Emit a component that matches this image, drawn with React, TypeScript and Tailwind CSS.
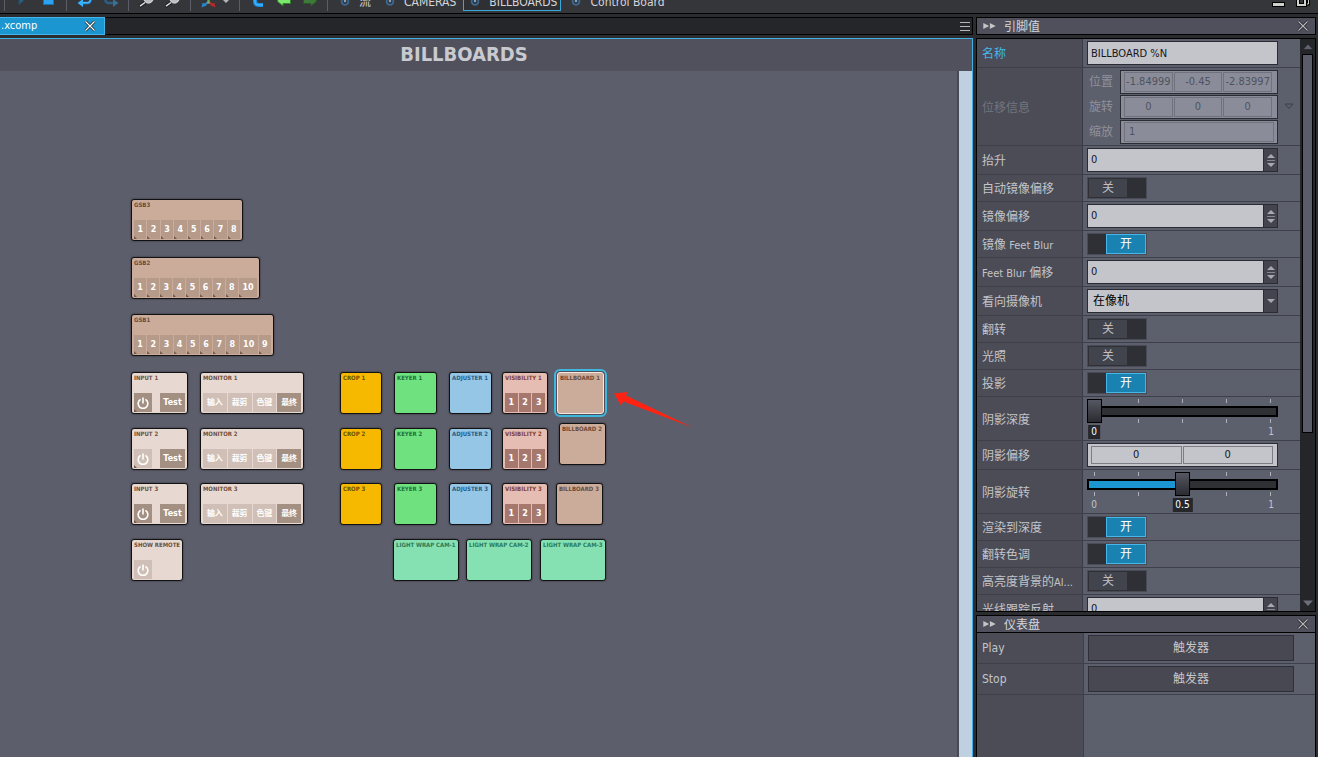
import { useState } from "react";
import type { CSSProperties, ReactNode } from "react";
import clsx from "clsx";

/* ---------- shared bits ---------- */

function CloseIcon({ className }: { className?: string }) {
  return (
    <svg viewBox="0 0 12 12" className={clsx("h-3 w-3", className)} fill="none">
      <path d="M1.5 1.5l9 9M10.5 1.5l-9 9" stroke="#1d1e22" strokeWidth="2.6" />
      <path d="M1.5 1.5l9 9M10.5 1.5l-9 9" stroke="currentColor" strokeWidth="1.2" />
    </svg>
  );
}

// latin runs sit one pixel smaller than the chinese glyphs
function MixedText({ text }: { text: string }) {
  return (
    <>
      {text.split(/([\x20-\x7e]+)/).map((part, i) =>
        /^[\x20-\x7e]+$/.test(part) ? (
          <span key={i} className="text-[11px]">
            {part}
          </span>
        ) : (
          part
        )
      )}
    </>
  );
}

/* ---------- toolbar ---------- */

function Separator() {
  return <span className="mx-1 h-[22px] w-0.5 shrink-0 border-l border-[#5c5d68]" />;
}

function ToolButton({ label, children }: { label: string; children: ReactNode }) {
  return (
    <button type="button" aria-label={label} className="flex h-[22px] w-[26px] shrink-0 items-center justify-center">
      <svg viewBox="0 0 16 16" className="h-4 w-4" fill="none">
        {children}
      </svg>
    </button>
  );
}

const views = [
  { name: "流", active: false },
  { name: "CAMERAS", active: false },
  { name: "BILLBOARDS", active: true },
  { name: "Control Board", active: false },
];

function Magnifier() {
  return (
    <>
      <path d="M6 10.500L0.500 14.500" stroke="#1d1e22" strokeWidth="3.500" />
      <circle cx="9.500" cy="6.500" r="4.600" fill="#b9bec6" stroke="#e6e6e6" />
      <path d="M6 10.500L1 14.200" stroke="#e0e0e0" strokeWidth="1.500" />
    </>
  );
}

function Toolbar() {
  return (
    <header className="flex h-[14px] shrink-0 items-end overflow-hidden border-b border-black bg-[#35363a]">
      <div className="flex h-[26px] w-full items-center">
        <Separator />
        <ToolButton label="Play">
          <path d="M4 1v12l7-7z" fill="#2b5f80" stroke="#224c66" />
        </ToolButton>
        <ToolButton label="Stop">
          <rect x="2.500" y="2" width="10" height="10.500" fill="#2ba3f0" stroke="#1573b8" />
        </ToolButton>
        <Separator />
        <ToolButton label="Undo">
          <path d="M4 11h6.500a3 3 0 0 0 3-3V6" stroke="#1e8fe0" strokeWidth="2.600" />
          <path d="M4 10.700h6.500a2.700 2.700 0 0 0 2.700-2.700V6" stroke="#5cc4ff" strokeWidth="1" />
          <path d="M0.500 11l5.500-4v8z" fill="#35b2ff" />
        </ToolButton>
        <ToolButton label="Redo">
          <path d="M12 11H5.500a3 3 0 0 1-3-3V6" stroke="#2f5f80" strokeWidth="2.600" />
          <path d="M15.500 11L10 7v8z" fill="#3a6f92" />
        </ToolButton>
        <Separator />
        <ToolButton label="Zoom in">
          <Magnifier />
        </ToolButton>
        <ToolButton label="Zoom out">
          <Magnifier />
        </ToolButton>
        <Separator />
        <ToolButton label="Axes">
          <path d="M7.500 10L4 12.500" stroke="#2f8fd0" strokeWidth="1.800" />
          <path d="M0.500 15.500l1-4.500 3.500.500.500 2z" fill="#2787c4" />
          <path d="M7.500 10l4 2.500" stroke="#b83232" strokeWidth="1.800" />
          <path d="M14.500 15.500l-1-4.500-3.500.500-.500 2z" fill="#b82828" />
          <path d="M7.500 10.500V0" stroke="#4dbb4a" strokeWidth="2.200" />
          <circle cx="7.500" cy="10.500" r="1.300" fill="#9a9a70" />
        </ToolButton>
        <button type="button" aria-label="Axis options" className="flex h-[22px] w-[13px] shrink-0 items-center">
          <svg viewBox="0 0 8 6" className="h-1.5 w-2" fill="#b4b5bc">
            <path d="M0 2h8L4 6z" />
          </svg>
        </button>
        <Separator />
        <ToolButton label="Link">
          <path d="M5 0v9c0 3 2 4 4 4h4" stroke="#1e8fe0" strokeWidth="4" />
          <path d="M5 0v9c0 3 2 4 4 4h4" stroke="#3bb5ff" strokeWidth="1.500" />
        </ToolButton>
        <ToolButton label="Back">
          <path d="M1 9l6-5.500V7h7.500v4.500H7V14z" fill="#7ae86a" stroke="#35812d" />
        </ToolButton>
        <ToolButton label="Forward">
          <path d="M15 9L9 3.500V7H1.500v4.500H9V14z" fill="#3d7a3a" stroke="#2c552b" />
        </ToolButton>
        <Separator />
        <nav className="flex items-center gap-[3px]">
          {views.map((view) => (
            <a
              key={view.name}
              href="#"
              className={clsx(
                "flex h-[22px] items-center gap-2 border pt-1 pr-[3px] pl-[5px] text-xs leading-none text-[#d4d5d9]",
                view.active ? "border-[#36a9e0] bg-[#2f3034]" : "border-transparent"
              )}
            >
              <svg viewBox="0 0 12 12" className="h-3 w-3" fill="none">
                <circle cx="6" cy="5.5" r="3.4" stroke="#3c678f" strokeWidth="1.8" />
                <circle cx="6" cy="5" r="1.2" fill="#86a8c8" />
              </svg>
              <span>{view.name}</span>
            </a>
          ))}
        </nav>
        <div className="ml-auto flex items-center gap-2.5 pr-2 text-[#d0d0cc]">
          <button type="button" aria-label="Minimize">
            <svg viewBox="0 0 14 14" className="h-3.5 w-3.5">
              <rect x="0.500" y="9.500" width="12" height="4" fill="currentColor" stroke="#000" />
            </svg>
          </button>
          <button type="button" aria-label="Restore">
            <svg viewBox="0 0 14 14" className="h-3.5 w-3.5" fill="none">
              <path d="M3 0h9.500v11H3z" stroke="#000" strokeWidth="3" />
              <path d="M3 0h9.500v11H3z" stroke="currentColor" />
              <path d="M2 3h7v9H2z" fill="#35363a" stroke="#000" strokeWidth="4" />
              <path d="M2 3h7v9H2z" stroke="currentColor" strokeWidth="2" />
            </svg>
          </button>
        </div>
      </div>
    </header>
  );
}

/* ---------- node canvas ---------- */

type Tone = "sand" | "cream" | "orange" | "green" | "blue" | "rose" | "mint";

const tones: Record<Tone, string> = {
  sand: "bg-[#cbac9a] text-[#6b4a38]",
  cream: "bg-[#e7d9d1] text-[#6b5040]",
  orange: "bg-[#f7b900] text-[#6a5000]",
  green: "bg-[#6fe27f] text-[#1f7038]",
  blue: "bg-[#96c6e6] text-[#275f86]",
  rose: "bg-[#e6bdb3] text-[#843f30]",
  mint: "bg-[#85e0b2] text-[#2c7a58]",
};

interface Cell {
  text: string;
  kind: "preset" | "on" | "off" | "channel";
}

interface CanvasNode {
  title: string;
  tone: Tone;
  x: number;
  y: number;
  w: number;
  cells?: Cell[];
  power?: "on" | "off";
  selected?: boolean;
}

const presets = (...names: string[]): Cell[] => names.map((text) => ({ text, kind: "preset" }));

const channels: Cell[] = ["1", "2", "3"].map((text) => ({ text, kind: "channel" }));

const monitorCells: Cell[] = [
  { text: "输入", kind: "off" },
  { text: "裁剪", kind: "off" },
  { text: "色键", kind: "off" },
  { text: "最终", kind: "on" },
];

const rowTops = [301, 357, 412];

const nodes: CanvasNode[] = [
  { title: "GSB3", tone: "sand", x: 131, y: 128, w: 112, cells: presets("1", "2", "3", "4", "5", "6", "7", "8") },
  { title: "GSB2", tone: "sand", x: 131, y: 186, w: 129, cells: presets("1", "2", "3", "4", "5", "6", "7", "8", "10") },
  { title: "GSB1", tone: "sand", x: 131, y: 243, w: 143, cells: presets("1", "2", "3", "4", "5", "6", "7", "8", "10", "9") },
  ...rowTops.flatMap((y, i): CanvasNode[] => [
    { title: `INPUT ${i + 1}`, tone: "cream", x: 131, y, w: 57, power: i === 1 ? "off" : "on", cells: [{ text: "Test", kind: "on" }] },
    { title: `MONITOR ${i + 1}`, tone: "cream", x: 200, y, w: 104, cells: monitorCells },
    { title: `CROP ${i + 1}`, tone: "orange", x: 340, y, w: 42 },
    { title: `KEYER ${i + 1}`, tone: "green", x: 394, y, w: 43 },
    { title: `ADJUSTER ${i + 1}`, tone: "blue", x: 449, y, w: 43 },
    { title: `VISIBILITY ${i + 1}`, tone: "rose", x: 502, y, w: 46, cells: channels },
  ]),
  { title: "BILLBOARD 1", tone: "sand", x: 557, y: 301, w: 47, selected: true },
  { title: "BILLBOARD 2", tone: "sand", x: 559, y: 352, w: 47 },
  { title: "BILLBOARD 3", tone: "sand", x: 556, y: 412, w: 47 },
  { title: "SHOW REMOTE", tone: "cream", x: 131, y: 468, w: 52, power: "off" },
  { title: "LIGHT WRAP CAM-1", tone: "mint", x: 393, y: 468, w: 66 },
  { title: "LIGHT WRAP CAM-2", tone: "mint", x: 466, y: 468, w: 66 },
  { title: "LIGHT WRAP CAM-3", tone: "mint", x: 540, y: 468, w: 66 },
];

const cellTones: Record<Cell["kind"], string> = {
  preset: "bg-[#b69a8a]",
  on: "bg-[#a48f83]",
  off: "bg-[#d0bfb6]",
  channel: "bg-[#a6786d]",
};

function CornerMark() {
  return (
    <svg viewBox="0 0 3 3" className="absolute bottom-0 left-0 h-[3px] w-[3px]" fill="#735a4c">
      <path d="M0 0l3 3H0z" />
    </svg>
  );
}

function NodeCell({ cell, className }: { cell: Cell; className?: string }) {
  return (
    <button
      type="button"
      className={clsx(
        "relative flex h-[19px] items-center justify-center font-['DejaVu_Sans','Noto_Sans_CJK_SC',sans-serif] text-[8px] leading-none font-bold text-white",
        cellTones[cell.kind],
        className
      )}
    >
      {cell.text}
      {cell.kind === "preset" && <CornerMark />}
    </button>
  );
}

function NodeBox({ node }: { node: CanvasNode }) {
  return (
    <div
      className={clsx(
        "absolute flex h-[42px] flex-col justify-between rounded-[3px] border px-0.5 pb-px shadow-[0_0_2px_rgba(0,0,0,0.6)]",
        tones[node.tone],
        node.selected ? "border-[#f3e9e2] outline-2 outline-offset-1 outline-[#3fb6dc]" : "border-[#111214]"
      )}
      style={{ left: node.x, top: node.y, width: node.w }}
    >
      <div className="text-[6px] leading-[9px] font-bold whitespace-nowrap">{node.title}</div>
      {(node.cells || node.power) && (
        <div className={clsx("flex", node.power ? "justify-between" : "gap-px")}>
          {node.power && (
            <button
              type="button"
              aria-label={`${node.title} power`}
              className={clsx(
                "relative flex h-[19px] w-[18px] items-center justify-center",
                node.power === "on" ? "bg-[#a48f83]" : "bg-[#d0bfb6]"
              )}
            >
              <svg viewBox="0 0 12 12" className="h-3 w-3" fill="none" stroke="#fff" strokeWidth="1.6">
                <path d="M3.600 2.400a4.800 4.800 0 1 0 4.800 0M6 0.500v6" />
              </svg>
              {node.cells && <CornerMark />}
            </button>
          )}
          {node.cells?.map((cell) => (
            <NodeCell
              key={cell.text}
              cell={cell}
              className={clsx(node.power ? "w-[25px]" : cell.text === "10" ? "flex-[3]" : "flex-[2]")}
            />
          ))}
        </div>
      )}
    </div>
  );
}

function Canvas() {
  return (
    <section className="flex min-h-0 flex-1 flex-col border-t border-r border-[#3fb0e4] bg-[#5d5e6b]">
      <h1 className="h-8 shrink-0 bg-[#50515d] pr-11 text-center text-[20px] leading-[30px] font-bold text-[#c9cacf]">
        BILLBOARDS
      </h1>
      <div className="flex min-h-0 flex-1">
        <div className="relative flex-1 overflow-hidden">
          {nodes.map((node) => (
            <NodeBox key={node.title} node={node} />
          ))}
          <svg viewBox="0 0 80 38" className="absolute top-[320px] left-[613px] h-[38px] w-20" fill="#ff2314">
            <path d="M1 2.500L14.500 1l-1.500 3.500L79.500 36.500 13 11.500l-2.500-1.200L8 14.500z" />
          </svg>
        </div>
        <div className="w-[15px] border-l-2 border-[#484955] bg-[#bfd1e0]" />
      </div>
    </section>
  );
}

/* ---------- property panel ---------- */

interface RowProps {
  id: string;
  label: string;
  size: "toggle" | "field" | "slider" | "group";
  tone?: "normal" | "accent" | "disabled";
  children: ReactNode;
}

const rowSizes = {
  toggle: "h-[27px]",
  field: "h-[29px]",
  slider: "h-11",
  group: "h-[78px]",
};

function Row({ id, label, size, tone = "normal", children }: RowProps) {
  return (
    <div className={clsx("flex shrink-0 border-b border-[#3e3f4a]", rowSizes[size])}>
      <label
        htmlFor={id}
        className={clsx(
          "flex w-[106px] shrink-0 items-center border-r border-[#3a3b44] bg-[#4b4c56] pt-0.5 pl-[5px] whitespace-pre",
          tone === "accent" && "text-[#45b8ea]",
          tone === "disabled" && "text-[#73757f]"
        )}
      >
        <span>
          <MixedText text={label} />
        </span>
      </label>
      <div className="min-w-0 flex-1 bg-[#5c5f6c] pt-0.5 pr-[22px] pl-1">{children}</div>
    </div>
  );
}

function Stepper() {
  return (
    <div className="flex w-[14px] shrink-0 flex-col items-center justify-center gap-px border-l border-[#2b2c33] bg-[#43444d]">
      <button type="button" aria-label="Increase" className="flex">
        <svg viewBox="0 0 8 6" className="h-1.5 w-2" fill="#a7a8b0">
          <path d="M0 5l4-4 4 4z" />
        </svg>
      </button>
      <span className="h-px w-2 bg-[#85868f]" />
      <button type="button" aria-label="Decrease" className="flex">
        <svg viewBox="0 0 8 6" className="h-1.5 w-2" fill="#a7a8b0">
          <path d="M0 1l4 4 4-4z" />
        </svg>
      </button>
    </div>
  );
}

function NumberField({ id }: { id: string }) {
  return (
    <div className="flex h-6 border border-[#2b2c33]">
      <input
        id={id}
        type="text"
        defaultValue="0"
        className="min-w-0 flex-1 bg-[#c4c5cb] px-[3px] text-[11px] text-[#15161a] outline-none"
      />
      <Stepper />
    </div>
  );
}

function Toggle({ id, initial }: { id: string; initial: boolean }) {
  const [on, setOn] = useState(initial);
  return (
    <button
      id={id}
      type="button"
      role="switch"
      aria-checked={on}
      onClick={() => setOn(!on)}
      className={clsx("flex h-[22px] w-[60px] border border-[#494b56] bg-[#2f3035]", on && "justify-end")}
    >
      <span
        className={clsx(
          "flex h-5 w-10 items-center justify-center border text-xs",
          on ? "border-[#47b6e8] bg-[#1a82b1] text-white" : "border-[#2f3035] bg-[#41434d] text-[#bfc0c6]"
        )}
      >
        {on ? "开" : "关"}
      </span>
    </button>
  );
}

function Slider({ id, initial }: { id: string; initial: number }) {
  const [value, setValue] = useState(initial);
  const ticks = (
    <div className="flex justify-between px-[7px]">
      {[0, 1, 2, 3, 4].map((tick) => (
        <span key={tick} className="h-1 w-px bg-[#b0b1b8]" />
      ))}
    </div>
  );
  return (
    <div>
      <div className="relative flex h-6 flex-col justify-between">
        {ticks}
        {ticks}
        <input
          id={id}
          type="range"
          min={0}
          max={1}
          step={0.01}
          value={value}
          onChange={(e) => setValue(Number(e.target.value))}
          className="absolute inset-0 h-6 w-full appearance-none bg-transparent outline-none [&::-webkit-slider-runnable-track]:h-[11px] [&::-webkit-slider-runnable-track]:bg-(image:--fill) [&::-webkit-slider-runnable-track]:shadow-[inset_0_0_0_2px_#000] [&::-webkit-slider-thumb]:-mt-[7px] [&::-webkit-slider-thumb]:h-6 [&::-webkit-slider-thumb]:w-[15px] [&::-webkit-slider-thumb]:appearance-none [&::-webkit-slider-thumb]:border [&::-webkit-slider-thumb]:border-black [&::-webkit-slider-thumb]:bg-linear-to-b [&::-webkit-slider-thumb]:from-[#555762] [&::-webkit-slider-thumb]:to-[#2b2c32]"
          style={
            {
              "--fill": `linear-gradient(to right, #1b96d0 ${value * 100}%, #2f3034 ${value * 100}%)`,
            } as CSSProperties
          }
        />
      </div>
      <div className="relative mt-0.5 flex justify-between px-[3px] text-[10px] leading-[14px]">
        <span className="w-2 text-center">0</span>
        <span className="w-2 text-center">1</span>
        <div className="absolute inset-x-[7px] inset-y-0">
          <output
            htmlFor={id}
            className="absolute -translate-x-1/2 bg-[#26272b] px-[3px] text-white"
            style={{ left: `${value * 100}%` }}
          >
            {value}
          </output>
        </div>
      </div>
    </div>
  );
}

const transformRows = [
  { name: "位置", values: ["-1.84999", "-0.45", "-2.83997"] },
  { name: "旋转", values: ["0", "0", "0"] },
  { name: "缩放", values: ["1"] },
];

function TransformFields({ id }: { id: string }) {
  return (
    <div className="relative flex flex-col gap-px text-[#8f919d]">
      {transformRows.map((row, r) => (
        <div key={row.name} className="flex h-6 items-center">
          <span className="w-[33px] pl-0.5">{row.name}</span>
          <div
            className={clsx(
              "flex h-6 min-w-0 flex-1 gap-px border border-[#2b2c33] bg-[#8a8d99] py-px pl-[3px]",
              row.values.length > 1 ? "pr-[5px]" : "pr-[3px]"
            )}
          >
            {row.values.map((value, i) => (
              <input
                key={i}
                id={r === 0 && i === 0 ? id : undefined}
                aria-label={`${row.name} ${i + 1}`}
                type="text"
                disabled
                defaultValue={value}
                className={clsx(
                  "w-0 min-w-0 flex-1 border border-[#70727d] bg-transparent text-[11px] text-[#50525e]",
                  row.values.length > 1 ? "px-px text-center" : "px-1"
                )}
              />
            ))}
          </div>
        </div>
      ))}
      <svg viewBox="0 0 10 7" className="absolute top-[33px] -right-4 h-[7px] w-2.5" fill="none" stroke="#3d3e48">
        <path d="M1 1h8L5 5.500z" />
      </svg>
    </div>
  );
}

function PanelHeader({ title }: { title: string }) {
  return (
    <div className="flex h-[18px] shrink-0 items-center border border-black bg-[#4f505b] px-1.5">
      <svg viewBox="0 0 14 8" className="h-2 w-3.5" fill="#c3c4c8" stroke="#33343a" strokeWidth="0.500">
        <path d="M0 0.500v7L7 4zM6.500 0.500v7L13.500 4z" />
      </svg>
      <h2 className="ml-[7px] pt-px text-xs leading-4 text-[#d5d6da]">{title}</h2>
      <button type="button" aria-label={`关闭${title}`} className="ml-auto text-[#b5b6bc]">
        <CloseIcon className="h-2.5 w-2.5" />
      </button>
    </div>
  );
}

function ScrollBar() {
  return (
    <div className="flex w-[15px] shrink-0 flex-col items-center gap-[3px] bg-[#25262a] pt-1 pb-1">
      <svg viewBox="0 0 10 8" className="h-2 w-2.5 shrink-0" fill="#5f616e" stroke="#17181b" strokeWidth="0.500">
        <path d="M0 6.500L5 1l5 5.500z" />
      </svg>
      <div className="min-h-0 flex-1">
        <div className="h-[70%] w-[11px] border border-black bg-[#5a5c69]" />
      </div>
      <svg viewBox="0 0 10 8" className="h-2 w-2.5 shrink-0" fill="#6c6e7b">
        <path d="M0 1.500L5 7l5-5.500z" />
      </svg>
    </div>
  );
}

function PropertyPanel() {
  return (
    <div className="flex min-h-0 flex-1 flex-col gap-[3px]">
      <PanelHeader title="引脚值" />
      <div className="flex min-h-0 flex-1 border border-black">
        <form className="flex min-w-0 flex-1 flex-col overflow-hidden" onSubmit={(e) => e.preventDefault()}>
          <Row id="name" label="名称" size="field" tone="accent">
            <input
              id="name"
              type="text"
              defaultValue="BILLBOARD %N"
              className="h-6 w-full border border-[#2b2c33] bg-[#c4c5cb] px-[3px] text-[11px] text-[#15161a] outline-none"
            />
          </Row>
          <Row id="transform" label="位移信息" size="group" tone="disabled">
            <TransformFields id="transform" />
          </Row>
          <Row id="lift" label="抬升" size="field">
            <NumberField id="lift" />
          </Row>
          <Row id="auto-mirror" label="自动镜像偏移" size="toggle">
            <Toggle id="auto-mirror" initial={false} />
          </Row>
          <Row id="mirror-offset" label="镜像偏移" size="field">
            <NumberField id="mirror-offset" />
          </Row>
          <Row id="mirror-blur" label="镜像 Feet Blur" size="toggle">
            <Toggle id="mirror-blur" initial />
          </Row>
          <Row id="blur-offset" label="Feet Blur 偏移" size="field">
            <NumberField id="blur-offset" />
          </Row>
          <Row id="look-at" label="看向摄像机" size="field">
            <div className="relative flex h-6 border border-[#2b2c33]">
              <select
                id="look-at"
                className="min-w-0 flex-1 appearance-none bg-[#c4c5cb] pl-[5px] text-xs text-black outline-none"
              >
                <option>在像机</option>
              </select>
              <span className="flex w-[14px] items-center justify-center border-l border-[#2b2c33] bg-[#43444d]">
                <svg viewBox="0 0 8 6" className="h-1.5 w-2" fill="#a7a8b0">
                  <path d="M0 1l4 4 4-4z" />
                </svg>
              </span>
            </div>
          </Row>
          <Row id="flip" label="翻转" size="toggle">
            <Toggle id="flip" initial={false} />
          </Row>
          <Row id="lighting" label="光照" size="toggle">
            <Toggle id="lighting" initial={false} />
          </Row>
          <Row id="shadow" label="投影" size="toggle">
            <Toggle id="shadow" initial />
          </Row>
          <Row id="shadow-depth" label="阴影深度" size="slider">
            <Slider id="shadow-depth" initial={0} />
          </Row>
          <Row id="shadow-offset" label="阴影偏移" size="field">
            <div className="flex h-6 gap-px border border-[#2b2c33] bg-[#c4c5cb] py-0.5 pr-1 pl-[3px]">
              <input
                id="shadow-offset"
                type="text"
                defaultValue="0"
                className="w-0 flex-1 border border-[#7c7d86] text-center text-[11px] text-[#15161a]"
              />
              <input
                aria-label="阴影偏移 Y"
                type="text"
                defaultValue="0"
                className="w-0 flex-1 border border-[#7c7d86] text-center text-[11px] text-[#15161a]"
              />
            </div>
          </Row>
          <Row id="shadow-rotation" label="阴影旋转" size="slider">
            <Slider id="shadow-rotation" initial={0.5} />
          </Row>
          <Row id="render-depth" label="渲染到深度" size="toggle">
            <Toggle id="render-depth" initial />
          </Row>
          <Row id="flip-tone" label="翻转色调" size="toggle">
            <Toggle id="flip-tone" initial />
          </Row>
          <Row id="highlight-alpha" label="高亮度背景的Al..." size="toggle">
            <Toggle id="highlight-alpha" initial={false} />
          </Row>
          <Row id="ray-reflection" label="光线跟踪反射" size="field">
            <NumberField id="ray-reflection" />
          </Row>
        </form>
        <ScrollBar />
      </div>
    </div>
  );
}

function Dashboard() {
  return (
    <div className="flex h-[142px] shrink-0 flex-col">
      <PanelHeader title="仪表盘" />
      <div className="flex flex-1 flex-col border-x border-black">
        {["Play", "Stop"].map((name) => (
          <div key={name} className="flex h-[31px] border-b border-[#3e3f4a]">
            <label
              htmlFor={`trigger-${name}`}
              className="flex w-[107px] items-center border-r border-[#3e3f4a] bg-[#4b4c56] pl-[5px] text-xs"
            >
              {name}
            </label>
            <div className="flex-1 bg-[#5c5f6c] pt-0.5 pr-[21px] pl-1">
              <button
                id={`trigger-${name}`}
                type="button"
                className="h-[26px] w-full border border-[#2f3037] bg-[#474852] text-xs text-[#c6c7cc]"
              >
                触发器
              </button>
            </div>
          </div>
        ))}
        <div className="flex flex-1">
          <div className="w-[107px] border-r border-[#3e3f4a] bg-[#4b4c56]" />
          <div className="flex-1 bg-[#5c5f6c]" />
        </div>
      </div>
    </div>
  );
}

export default function App() {
  return (
    <div className="flex h-screen flex-col overflow-hidden bg-[#2b2c30] font-['DejaVu_Sans_Condensed','DejaVu_Sans','Noto_Sans_CJK_SC',sans-serif] text-xs text-[#c3c4c9]">
      <Toolbar />
      <div className="flex min-h-0 flex-1 gap-[3px] pt-[3px] pr-[2px]">
        <main className="flex min-w-0 flex-1 flex-col gap-[3px]">
          <div className="flex h-[18px] shrink-0 items-center justify-between border-y border-r border-black bg-[#25262a]">
            <div className="-my-px flex h-[18px] w-[105px] items-center justify-between border border-l-0 border-[#45b4e8] bg-[#1b96d0] pr-2 pl-px text-[11px] text-white">
              <span>.xcomp</span>
              <button type="button" aria-label="Close tab">
                <CloseIcon />
              </button>
            </div>
            <button type="button" aria-label="Tab list" className="mr-0.5 flex w-2.5 flex-col gap-[3px]">
              <span className="h-px bg-[#b5b6bc]" />
              <span className="h-px bg-[#b5b6bc]" />
              <span className="h-px bg-[#b5b6bc]" />
            </button>
          </div>
          <Canvas />
        </main>
        <aside className="flex w-[340px] shrink-0 flex-col gap-[3px]">
          <PropertyPanel />
          <Dashboard />
        </aside>
      </div>
    </div>
  );
}
